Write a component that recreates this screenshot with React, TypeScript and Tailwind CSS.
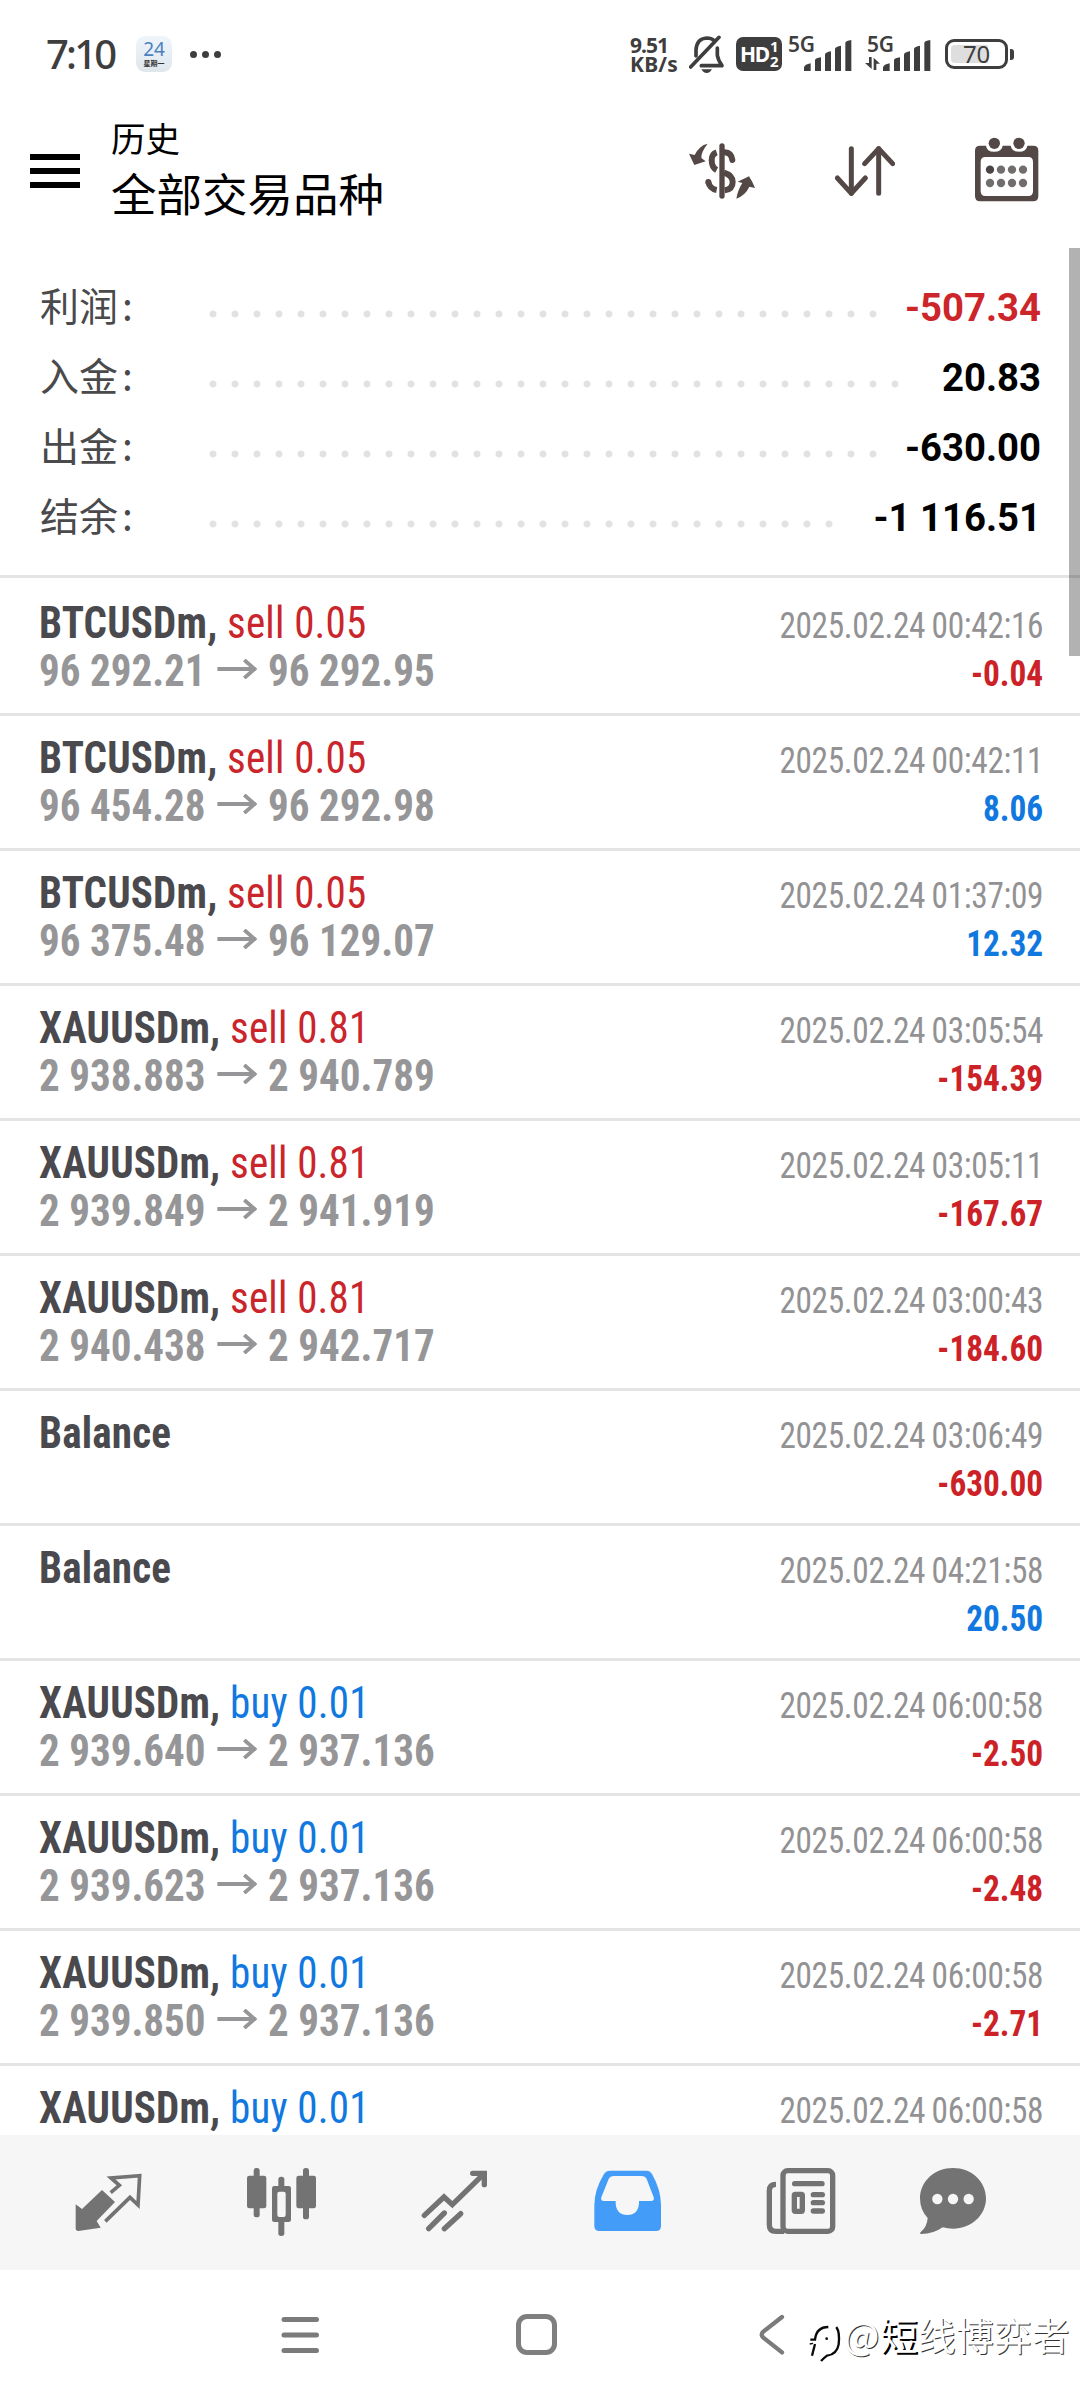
type Summary = { label: string; value: string; dots: number; negative?: boolean };

type Deal = {
  symbol: string;
  side?: "sell" | "buy";
  volume?: string;
  open?: string;
  close?: string;
  time: string;
  profit: string;
};

const summary: Summary[] = [
  { label: "利润", value: "-507.34", dots: 31, negative: true },
  { label: "入金", value: "20.83", dots: 32 },
  { label: "出金", value: "-630.00", dots: 31 },
  { label: "结余", value: "-1 116.51", dots: 29 },
];

const deals: Deal[] = [
  { symbol: "BTCUSDm", side: "sell", volume: "0.05", open: "96 292.21", close: "96 292.95", time: "2025.02.24 00:42:16", profit: "-0.04" },
  { symbol: "BTCUSDm", side: "sell", volume: "0.05", open: "96 454.28", close: "96 292.98", time: "2025.02.24 00:42:11", profit: "8.06" },
  { symbol: "BTCUSDm", side: "sell", volume: "0.05", open: "96 375.48", close: "96 129.07", time: "2025.02.24 01:37:09", profit: "12.32" },
  { symbol: "XAUUSDm", side: "sell", volume: "0.81", open: "2 938.883", close: "2 940.789", time: "2025.02.24 03:05:54", profit: "-154.39" },
  { symbol: "XAUUSDm", side: "sell", volume: "0.81", open: "2 939.849", close: "2 941.919", time: "2025.02.24 03:05:11", profit: "-167.67" },
  { symbol: "XAUUSDm", side: "sell", volume: "0.81", open: "2 940.438", close: "2 942.717", time: "2025.02.24 03:00:43", profit: "-184.60" },
  { symbol: "Balance", time: "2025.02.24 03:06:49", profit: "-630.00" },
  { symbol: "Balance", time: "2025.02.24 04:21:58", profit: "20.50" },
  { symbol: "XAUUSDm", side: "buy", volume: "0.01", open: "2 939.640", close: "2 937.136", time: "2025.02.24 06:00:58", profit: "-2.50" },
  { symbol: "XAUUSDm", side: "buy", volume: "0.01", open: "2 939.623", close: "2 937.136", time: "2025.02.24 06:00:58", profit: "-2.48" },
  { symbol: "XAUUSDm", side: "buy", volume: "0.01", open: "2 939.850", close: "2 937.136", time: "2025.02.24 06:00:58", profit: "-2.71" },
];

const lastDeal: Deal = { symbol: "XAUUSDm", side: "buy", volume: "0.01", time: "2025.02.24 06:00:58", profit: "" };

const SignalBars = () => (
  <svg className="h-[31px] w-[48px]" viewBox="0 0 144 93" fill="#3e3e3e">
    <path d="M0 93V82Q2 73 20 70V93Z" />
    <path d="M33 93V60Q35 54 51 52V93Z" />
    <path d="M63 93V43Q65 37 81 34V93Z" />
    <path d="M93 93V26Q95 20 111 17V93Z" />
    <path d="M124 93V8Q126 2 142 0V93Z" />
  </svg>
);

const StatusBar = () => {
  return (
    <div className="flex h-[84px] items-start pl-[46px] pr-[66px] font-['Noto_Sans'] text-[#3e3e3e]">
      <span className="mt-[27px] w-[90px] text-[40px] leading-[54px] font-medium tracking-[-2.8px]">7:10</span>
      <div className="mt-[36px] flex h-[36px] w-[36px] flex-col items-center rounded-[9px] bg-gradient-to-b from-[#eef6fc] to-[#dfe6ec]">
        <span className="mt-[3px] text-[19px] leading-[20px] text-[#4a7fc0]">24</span>
        <span className="font-['Noto_Sans_CJK_SC'] text-[7px] leading-[8px] font-bold text-[#333]">星期一</span>
      </div>
      <div className="mt-[51px] ml-[18px] flex gap-[5px]">
        <i className="h-[7px] w-[7px] rounded-full bg-[#3e3e3e]" />
        <i className="h-[7px] w-[7px] rounded-full bg-[#3e3e3e]" />
        <i className="h-[7px] w-[7px] rounded-full bg-[#3e3e3e]" />
      </div>

      <div className="ml-auto flex items-start">
        <div className="mt-[36px] w-[59px] text-[21px] leading-[19px] font-bold">
          <p className="tracking-[-1px]">9.51</p>
          <p className="tracking-[0.2px]">KB/s</p>
        </div>
        <svg className="mt-[35px] h-[38px] w-[36px]" viewBox="267 105 108 114" fill="none" stroke="#3e3e3e" strokeWidth="11" strokeLinecap="round">
          <path d="M288 168V150Q290 116 320 114Q334 114 343 122" />
          <path d="M352 144V166Q354 180 366 197H304" strokeLinejoin="round" />
          <path d="M272 201L357 112" />
          <path d="M304 208H336Q330 219 320 219Q310 219 304 208Z" fill="#3e3e3e" stroke="none" />
        </svg>
        <div className="mt-[37px] ml-[11px] flex h-[34px] w-[46px] items-center rounded-[7px] bg-[#3e3e3e] pl-[4px] text-white">
          <span className="w-[28px] text-[21px] leading-[34px] font-bold tracking-[-1.2px]">HD</span>
          <span className="ml-[2px] flex flex-col text-[15px] leading-[15px] font-bold">
            <span>1</span>
            <span>2</span>
          </span>
        </div>
        <div className="mt-[34px] ml-[6px] flex w-[63px]">
          <span className="w-[16px] text-[21px] leading-[20px] font-semibold tracking-[-0.2px]">5G</span>
          <div className="pt-[6px]"><SignalBars /></div>
        </div>
        <div className="mt-[34px] ml-[16px] flex w-[64px]">
          <div className="w-[16px] text-[21px] leading-[20px] font-semibold tracking-[-0.2px]">
            <p>5G</p>
            <svg className="-ml-[2px] mt-[3px] h-[13px] w-[15px]" viewBox="0 0 45 39" fill="#3e3e3e">
              <path d="M12 0h8v36l-20-18h12z" />
              <path d="M26 39h8v-19h11l-19-18z" />
            </svg>
          </div>
          <div className="pt-[6px]"><SignalBars /></div>
        </div>
        <div className="mt-[39px] ml-[14px] flex items-center">
          <div className="h-[30px] w-[63px] rounded-[9px] border-[3px] border-[#3e3e3e] p-[3px]">
            <div className="flex h-[18px] w-[37px] items-center rounded-l-[4px] bg-[#dedede]">
              <span className="ml-[12px] text-[24px] leading-[18px] tracking-[-0.3px]">70</span>
            </div>
          </div>
          <i className="ml-[2px] h-[11px] w-[4px] rounded-r-[3px] bg-[#3e3e3e]" />
        </div>
      </div>
    </div>
  );
};

const Header = () => {
  return (
    <div className="flex h-[164px] items-start pl-[30px] pr-[41px]">
      <div className="mt-[70px] flex w-[50px] flex-col gap-[8px]">
        <i className="h-[6px] bg-black" />
        <i className="h-[6px] bg-black" />
        <i className="h-[6px] bg-black" />
      </div>
      <div className="ml-[31px] flex flex-col pt-[26px] font-['Noto_Sans_CJK_SC'] text-black">
        <span className="text-[34.5px] leading-[54px]">历史</span>
        <span className="text-[45.5px] leading-[56px]">全部交易品种</span>
      </div>
      <div className="ml-auto flex gap-[80px] pt-[53px]">
        <svg className="h-[66px] w-[66px]" viewBox="267 411 198 198" fill="none" stroke="#534846" strokeWidth="18">
          <path d="M366 438V588" strokeWidth="16" strokeLinecap="round" />
          <path d="M350 457Q335 462 335 480Q335 502 350 510" />
          <path d="M374 457Q394 458 397 480" strokeLinecap="round" />
          <path d="M372 518Q398 526 398 546Q398 568 374 571" />
          <path d="M325 546Q329 566 350 570" />
          <circle cx="325" cy="546" r="9" fill="#534846" stroke="none" />
          <path d="M323 431Q298 436 284 465L267 461Q275 478 283 495L317 484L304 474Q303 456 323 431Z" fill="#534846" stroke="none" />
          <path d="M409 596Q414 568 427 549L413 545L447 529Q458 546 465 564L448 560Q436 586 409 596Z" fill="#534846" stroke="none" />
        </svg>
        <svg className="h-[66px] w-[60px]" viewBox="705 411 180 198" fill="none" stroke="#534846" strokeWidth="15" strokeLinecap="round" strokeLinejoin="round">
          <path d="M754 446V580" />
          <path d="M712 534L754 580L796 534" />
          <path d="M836 580V446" />
          <path d="M794 491L836 446L878 491" />
        </svg>
        <svg className="h-[66px] w-[64px]" viewBox="1125 411 192 198" fill="#534846">
          <path fillRule="evenodd" d="M1140 437H1158Q1160 455 1182 455Q1206 455 1208 437H1232Q1235 455 1257 455Q1280 455 1282 437H1300Q1315 437 1315 452V588Q1315 604 1300 604H1140Q1125 604 1125 588V452Q1125 437 1140 437ZM1156 471Q1142 471 1142 486V574Q1142 588 1156 588H1285Q1299 588 1299 574V486Q1299 471 1285 471Z" />
          <circle cx="1183" cy="430" r="17" />
          <circle cx="1257" cy="430" r="17" />
          <circle cx="1170" cy="509" r="12.5" fill="#4a4446" />
          <circle cx="1203" cy="509" r="12.5" fill="#716d6d" />
          <circle cx="1236" cy="509" r="12.5" fill="#716d6d" />
          <circle cx="1269" cy="509" r="12.5" fill="#716d6d" />
          <circle cx="1170" cy="549" r="12.5" fill="#716d6d" />
          <circle cx="1203" cy="549" r="12.5" fill="#716d6d" />
          <circle cx="1236" cy="549" r="12.5" fill="#716d6d" />
          <circle cx="1269" cy="549" r="12.5" fill="#716d6d" />
        </svg>
      </div>
    </div>
  );
};

const SummaryRow = ({ label, value, dots, negative }: Summary) => {
  return (
    <div className="flex h-[70px] items-center">
      <div className="w-[162px] font-['Noto_Sans_CJK_SC'] text-[39px] leading-[70px] text-[#4a494b]">
        {label}
        <span className="ml-[4px]">:</span>
      </div>
      <div
        className="mt-[20px] h-[8px] bg-[radial-gradient(circle,#e2e2e2_3px,transparent_4px)] bg-[length:22px_8px] bg-repeat-x"
        style={{ width: dots * 22 }}
      />
      <span className={`ml-auto pt-[8px] text-[38.3px] leading-[62px] font-bold ${negative ? "text-[#cc262b]" : "text-black"}`}>
        {value}
      </span>
    </div>
  );
};

const DealRow = ({ deal }: { deal: Deal }) => {
  const loss = deal.profit.startsWith("-");
  return (
    <div className="flex h-[135px] justify-between border-b-[3px] border-[#e4e4e4] pt-[18px] pl-[39px] pr-[37px] [font-stretch:75%]">
      <div className="origin-left scale-x-[0.933] text-[44px] leading-[48px] whitespace-nowrap">
        <p className="tracking-[0.2px]">
          <span className="font-bold text-[#4a494d]">{deal.symbol}{deal.side && ","}</span>
          {deal.side && (
            <span className={deal.side === "sell" ? "text-[#ca252b]" : "text-[#1078de]"}> {deal.side} {deal.volume}</span>
          )}
        </p>
        {deal.open && (
          <p className="font-bold text-[#969698]">
            {deal.open}
            <svg className="mx-[12px] mb-[7px] inline h-[20px] w-[43px] align-baseline" viewBox="0 0 43 20" fill="none" stroke="#969698" strokeWidth="4">
              <path d="M0 10H41" />
              <path d="M29 1L40 10L29 19" />
            </svg>
            {deal.close}
          </p>
        )}
      </div>
      <div className="origin-right scale-x-[0.925] pt-[3px] text-right text-[36px] leading-[48px] whitespace-nowrap">
        <p className="tracking-[-0.35px] text-[#929294] [word-spacing:-1px]">{deal.time}</p>
        <p className={`font-bold ${loss ? "text-[#cc2127]" : "text-[#1078de]"}`}>{deal.profit}</p>
      </div>
    </div>
  );
};

const TabBar = () => {
  return (
    <div className="flex h-[135px] shrink-0 items-start gap-[103px] bg-[#f6f6f6] pt-[32px] pl-[74px]">
      <svg className="h-[70px] w-[70px] shrink-0" viewBox="42 51 210 210" fill="none" stroke="#737373" strokeWidth="11">
        <path d="M126 120L165 156L110 213L122 233L55 243Q47 243 47 235V163L66 177Z" fill="#737373" stroke="none" />
        <path d="M152 128L178 106L153 84L239 77L234 165L210 142L136 214" />
      </svg>
      <svg className="h-[70px] w-[70px] shrink-0" viewBox="560 51 210 210" fill="#737373">
        <rect x="580" y="54" width="18" height="148" rx="8" />
        <rect x="560" y="77" width="58" height="98" rx="7" />
        <rect x="728" y="54" width="18" height="154" rx="8" />
        <rect x="708" y="77" width="59" height="98" rx="7" />
        <rect x="654" y="80" width="18" height="178" rx="8" />
        <rect x="635" y="108" width="57" height="108" rx="7" />
        <rect x="651" y="125" width="25" height="76" rx="6" fill="#f6f6f6" />
      </svg>
      <svg className="h-[70px] w-[70px] shrink-0" viewBox="1080 51 210 210" fill="none" stroke="#737373" strokeWidth="16" strokeLinecap="round">
        <path d="M1093 196L1152 141L1177 164L1270 73" />
        <path d="M1238 70H1273V104" />
        <path d="M1106 236L1153 189" />
        <path d="M1153 236L1202 191" />
      </svg>
      <svg className="h-[70px] w-[70px] shrink-0" viewBox="39 51 210 210" fill="#439cf8">
        <path fillRule="evenodd" d="M90 62H200Q210 62 216 72Q243 120 243 165V228Q243 243 228 243H58Q43 243 43 228V165Q43 120 72 72Q78 62 90 62ZM102 78Q90 78 86 87L64 142Q61 153 72 153H107V160Q109 195 142 195Q175 195 177 160V153H213Q224 153 221 142L200 87Q196 78 184 78Z" />
      </svg>
      <svg className="h-[70px] w-[70px] shrink-0" viewBox="558 51 210 210" fill="none" stroke="#737373" strokeWidth="16">
        <rect x="609" y="62" width="149" height="182" rx="14" />
        <path d="M588 103Q568 103 568 122V224Q568 244 588 244H612" />
        <path d="M644 101H726" strokeLinecap="round" />
        <rect x="643" y="133" width="24" height="51" rx="3" />
        <path d="M700 134H727M700 158H727M700 183H727" strokeLinecap="round" />
      </svg>
      <svg className="-ml-[20px] h-[70px] w-[70px] shrink-0" viewBox="1017 51 210 210" fill="#737373">
        <path d="M1119 54C1174 54 1218 94 1218 145C1218 196 1174 236 1119 236Q1103 236 1088 232Q1060 252 1024 252Q1017 250 1023 245Q1041 231 1043 204Q1020 180 1020 145C1020 94 1064 54 1119 54Z" />
        <circle cx="1072" cy="147" r="15.5" fill="#f6f6f6" />
        <circle cx="1119" cy="147" r="15.5" fill="#f6f6f6" />
        <circle cx="1166" cy="147" r="15.5" fill="#f6f6f6" />
      </svg>
    </div>
  );
};

const NavBar = () => {
  return (
    <div className="flex h-[130px] shrink-0 items-start pt-[44px] pl-[281px]">
      <svg className="h-[42px] w-[38px]" viewBox="0 0 38 42" fill="none" stroke="#7b7b7b" strokeWidth="5" strokeLinecap="round">
        <path d="M3 5.5H35.5M3 21H35.5M3 36.5H35.5" />
      </svg>
      <div className="ml-[197px] h-[41px] w-[41px] rounded-[11px] border-[5px] border-[#7f7f7f]" />
      <svg className="ml-[202px] h-[42px] w-[26px]" viewBox="57 42 78 126" fill="none" stroke="#7b7b7b" strokeWidth="13" strokeLinecap="round">
        <path d="M126 51L70 95Q60 104 70 113L126 157" />
      </svg>
      <svg className="mt-[9px] ml-[21px] h-[40px] w-[36px]" viewBox="195 72 108 120" fill="none" stroke="#0a0a0a">
        <path d="M208 122H222Q226 84 262 84" strokeWidth="7" />
        <path d="M206 135L216 133" strokeWidth="4" />
        <path d="M222 135L213 170" strokeWidth="7" />
        <path d="M286 84Q297 100 293 136Q288 166 258 170Q250 176 240 186" strokeWidth="7" />
        <circle cx="257" cy="119" r="4" fill="#0a0a0a" stroke="none" />
      </svg>
      <span className="ml-[2px] -mt-[2px] font-['Noto_Sans_CJK_SC'] text-[37.5px] leading-[44px] tracking-[0.5px] whitespace-nowrap text-white [text-shadow:1px_1px_0_#333]">
        @<span className="[text-shadow:2px_1.5px_0_#000]">短</span>线博弈者
      </span>
    </div>
  );
};

const App = () => {
  return (
    <div className="flex h-[2400px] w-[1080px] flex-col overflow-hidden bg-white font-[Roboto,sans-serif]">
      <StatusBar />
      <Header />
      <div className="relative h-[1887px] overflow-hidden">
        <div className="border-b-[3px] border-[#e4e4e4] pt-[21px] pb-[26px] pl-[40px] pr-[39px]">
          {summary.map((item) => (
            <SummaryRow key={item.label} {...item} />
          ))}
        </div>
        <div className="pt-[3px]">
          {deals.map((deal, i) => (
            <DealRow key={i} deal={deal} />
          ))}
          <DealRow deal={lastDeal} />
        </div>
        <div className="absolute top-0 right-0 h-[408px] w-[11px] bg-black/30" />
      </div>
      <TabBar />
      <NavBar />
    </div>
  );
};

export default App;
